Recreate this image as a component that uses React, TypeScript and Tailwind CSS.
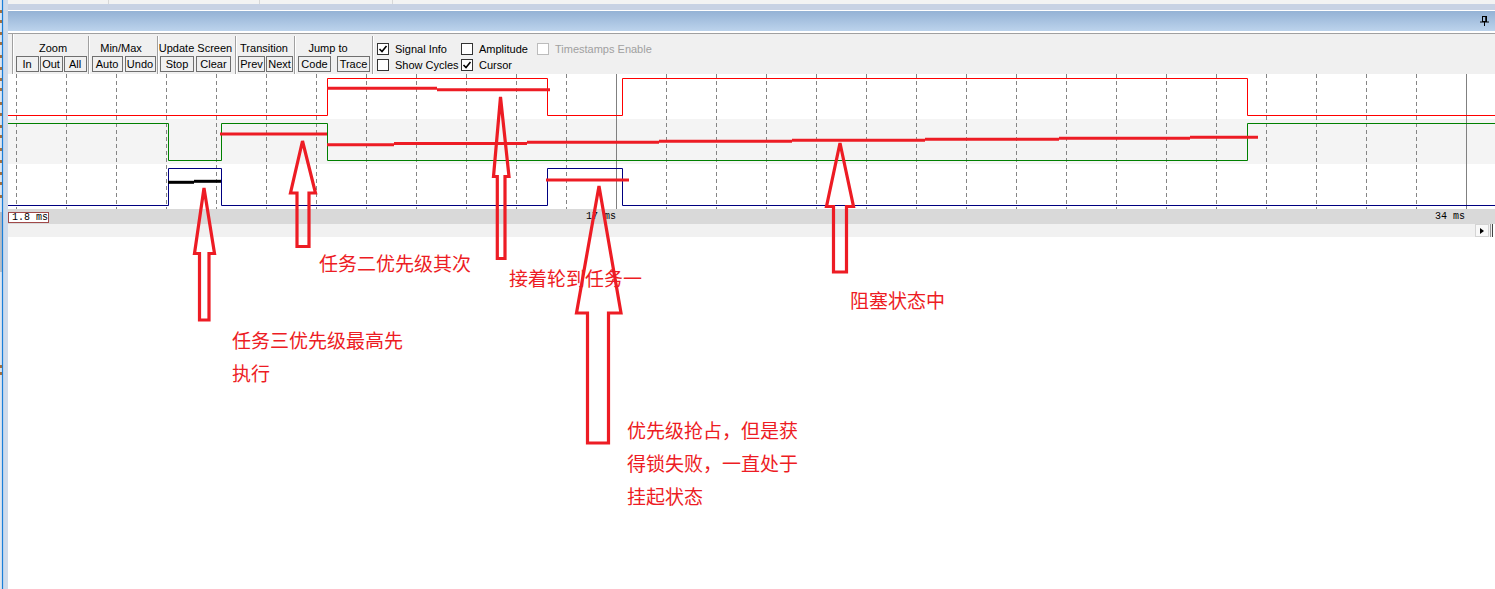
import React from 'react'

const RED = '#ed1c24'

const GRID_X = Array.from({ length: 30 }, (_, i) => 16.5 + i * 50)
const CURSOR_X = [616.5, 1466.5]

const SIG_RED = '8,115.5 327.5,115.5 327.5,78.5 547.5,78.5 547.5,115.5 622.5,115.5 622.5,78.5 1247.5,78.5 1247.5,115.5 1495,115.5'
const SIG_GREEN = '8,123.5 168.5,123.5 168.5,160.5 221.5,160.5 221.5,123.5 327.5,123.5 327.5,160.5 1247.5,160.5 1247.5,123.5 1495,123.5'
const SIG_NAVY = '8,205.5 168.5,205.5 168.5,168.5 221.5,168.5 221.5,205.5 547.5,205.5 547.5,168.5 622.5,168.5 622.5,205.5 1495,205.5'

// hand drawn marks on top of the trace
const MARKS = [
  { x1: 327, x2: 437, y: 88.3, c: RED },
  { x1: 437, x2: 550, y: 89.7, c: RED },
  { x1: 220, x2: 327, y: 134, c: RED },
  { x1: 327, x2: 394, y: 144.7, c: RED },
  { x1: 394, x2: 527, y: 143.5, c: RED },
  { x1: 527, x2: 659, y: 142.3, c: RED },
  { x1: 659, x2: 792, y: 141.3, c: RED },
  { x1: 792, x2: 925, y: 140.3, c: RED },
  { x1: 925, x2: 1059, y: 139.3, c: RED },
  { x1: 1059, x2: 1190, y: 138.3, c: RED },
  { x1: 1190, x2: 1258, y: 137.3, c: RED },
  { x1: 546, x2: 629, y: 180, c: RED },
  { x1: 168, x2: 194, y: 182.3, c: '#000' },
  { x1: 194, x2: 221, y: 181.3, c: '#000' },
]

const ARROWS = [
  { tx: 204, ty: 188, base: 253.5, hl: 194.5, hr: 214.5, sl: 199.5, sr: 209, bottom: 320 },
  { tx: 302.5, ty: 141, base: 193, hl: 290.5, hr: 315.5, sl: 297, sr: 309, bottom: 246.5 },
  { tx: 500.5, ty: 97, base: 176.5, hl: 493.5, hr: 509, sl: 497.3, sr: 505, bottom: 258.5 },
  { tx: 599, ty: 186, base: 313, hl: 576.5, hr: 621, sl: 587.5, sr: 608.5, bottom: 443 },
  { tx: 840, ty: 143, base: 206.5, hl: 826.5, hr: 853.5, sl: 833.5, sr: 846.5, bottom: 272 },
]

const arrowPoints = (a: (typeof ARROWS)[number]) =>
  `${a.tx},${a.ty} ${a.hr},${a.base} ${a.sr},${a.base} ${a.sr},${a.bottom} ${a.sl},${a.bottom} ${a.sl},${a.base} ${a.hl},${a.base}`

const NOTES = [
  { left: 'left-[232px] top-[323px]', lines: ['任务三优先级最高先', '执行'] },
  { left: 'left-[319px] top-[246px]', lines: ['任务二优先级其次'] },
  { left: 'left-[509px] top-[261px]', lines: ['接着轮到任务一'] },
  { left: 'left-[627px] top-[413px]', lines: ['优先级抢占，但是获', '得锁失败，一直处于', '挂起状态'] },
  { left: 'left-[850px] top-[283px]', lines: ['阻塞状态中'] },
]

function Sep({ full }: { full?: boolean }) {
  return (
    <div className={`w-[2px] flex ${full ? '' : 'mt-[2px]'}`}>
      <div className="w-px bg-[#a0a0a0]" />
      <div className="w-px bg-white" />
    </div>
  )
}

function Btn({ label, w }: { label: string; w: string }) {
  return (
    <div className={`${w} h-[16px] border border-[#6f6f6f] bg-[#f0f0f0] flex items-center justify-center text-[11px] leading-none text-black`}>
      {label}
    </div>
  )
}

function Group({ label, className, labelClass, gap, children }: {
  label: string
  className: string
  labelClass?: string
  gap: string
  children: React.ReactNode
}) {
  return (
    <div className={`flex flex-col items-center pt-[7px] ${className}`}>
      <div className={`h-[14px] leading-[15px] text-[11px] text-black whitespace-nowrap ${labelClass ?? ''}`}>{label}</div>
      <div className={`mt-[1px] flex ${gap}`}>{children}</div>
    </div>
  )
}

function Check({ label, checked, disabled }: { label: string; checked?: boolean; disabled?: boolean }) {
  return (
    <div className="flex items-center gap-[6px]">
      <div className={`w-[12px] h-[12px] border bg-white flex items-center justify-center ${disabled ? 'border-[#bcbcbc]' : 'border-[#333333]'}`}>
        {checked && (
          <svg width="10" height="10" viewBox="0 0 10 10">
            <path d="M1.5 5 L4 7.5 L8.5 2" fill="none" stroke="#000" strokeWidth="1.6" />
          </svg>
        )}
      </div>
      <span className={`text-[11px] leading-none whitespace-nowrap ${disabled ? 'text-[#a0a0a0]' : 'text-black'}`}>{label}</span>
    </div>
  )
}

function LeftStrip() {
  const dots = [10, 20, 32, 42, 55, 67, 78, 88, 102, 113, 125, 135, 148, 160, 172, 182, 195, 365, 372]
  return (
    <svg width="8" height="589" className="shrink-0 block">
      <rect x="0" y="0" width="8" height="589" fill="#cfdbeb" />
      <rect x="0" y="0" width="2" height="589" fill="#dfe6f0" />
      {dots.map(y => (
        <rect key={y} x="0" y={y} width="2" height="3" fill="#a8703c" />
      ))}
      <rect x="0" y="212" width="2" height="60" fill="#b9bec6" />
      <line x1="2.5" y1="0" x2="2.5" y2="589" stroke="#1a7fd9" strokeWidth="1.2" />
    </svg>
  )
}

export default function App() {
  return (
    <div className="relative w-[1495px] h-[589px] overflow-hidden bg-white flex font-['Liberation_Sans',Arial,sans-serif]">
      <LeftStrip />

      <div className="flex-1 flex flex-col min-w-0">
        {/* top frame */}
        <div className="h-[4px] bg-[#f3f3f3] flex">
          <div className="w-[100px]" />
          <div className="w-px bg-[#d8d8d8]" />
          <div className="w-[150px]" />
          <div className="w-px bg-[#d8d8d8]" />
          <div className="w-[132px]" />
          <div className="w-px bg-[#d8d8d8]" />
        </div>
        <div className="h-[6px] bg-[#c8d2e4]" />
        <div className="h-[1px] bg-white" />
        <div className="h-[20px] bg-linear-to-b from-[#94b2d5] to-[#bcd3ec] flex items-center justify-end pr-[5px]">
          <svg width="10" height="10" viewBox="0 0 10 10">
            <rect x="2.5" y="0.5" width="4" height="5" fill="none" stroke="#000" />
            <line x1="6" y1="0.5" x2="6" y2="5.5" stroke="#000" strokeWidth="1.5" />
            <line x1="0" y1="6" x2="9" y2="6" stroke="#000" />
            <line x1="4.5" y1="6" x2="4.5" y2="10" stroke="#000" />
          </svg>
        </div>
        <div className="h-[2px] bg-white" />

        {/* toolbar */}
        <div className="h-[41px] border-t border-[#a0a0a0] bg-[#f0f0f0] flex">
          <div className="w-[4px]" />
          <Sep full />
          <Group label="Zoom" className="w-[74px]" labelClass="ml-[4px]" gap="gap-[1px]">
            <Btn label="In" w="w-[23px]" />
            <Btn label="Out" w="w-[23px]" />
            <Btn label="All" w="w-[23px]" />
          </Group>
          <Sep />
          <Group label="Min/Max" className="w-[67px]" labelClass="mr-[5px]" gap="gap-[2px]">
            <Btn label="Auto" w="w-[31px]" />
            <Btn label="Undo" w="w-[31px]" />
          </Group>
          <Sep />
          <Group label="Update Screen" className="w-[76px] pr-[3px]" gap="gap-[2px]">
            <Btn label="Stop" w="w-[34px]" />
            <Btn label="Clear" w="w-[35px]" />
          </Group>
          <Sep />
          <Group label="Transition" className="w-[57px]" labelClass="mr-[3px]" gap="gap-[1px]">
            <Btn label="Prev" w="w-[27px]" />
            <Btn label="Next" w="w-[27px]" />
          </Group>
          <Sep />
          <Group label="Jump to" className="w-[76px]" labelClass="mr-[12px]" gap="gap-[6px]">
            <Btn label="Code" w="w-[33px]" />
            <Btn label="Trace" w="w-[33px]" />
          </Group>
          <Sep />
          <div className="ml-[3px] pt-[7px] grid grid-cols-[84px_76px_auto] grid-rows-[16px_16px] items-center">
            <Check label="Signal Info" checked />
            <Check label="Amplitude" />
            <Check label="Timestamps Enable" disabled />
            <Check label="Show Cycles" />
            <Check label="Cursor" checked />
          </div>
        </div>

        {/* logic analyzer trace */}
        <svg width="1487" height="135" viewBox="8 74 1487 135" className="block shrink-0">
          <rect x="8" y="74" width="1487" height="45" fill="#ffffff" />
          <rect x="8" y="119" width="1487" height="45" fill="#f4f4f4" />
          <rect x="8" y="164" width="1487" height="45" fill="#ffffff" />
          {GRID_X.map(x =>
            CURSOR_X.includes(x) ? (
              <line key={x} x1={x} y1="74" x2={x} y2="209" stroke="#808080" strokeWidth="1" />
            ) : (
              <line key={x} x1={x} y1="74" x2={x} y2="209" stroke="#858585" strokeWidth="1" strokeDasharray="4 3" />
            )
          )}
          <polyline points={SIG_RED} fill="none" stroke="#ff0000" strokeWidth="1" />
          <polyline points={SIG_GREEN} fill="none" stroke="#008000" strokeWidth="1" />
          <polyline points={SIG_NAVY} fill="none" stroke="#000080" strokeWidth="1" />
        </svg>

        {/* time axis */}
        <div className="h-[15px] bg-[#d9d9d9] relative font-['Liberation_Mono',monospace] text-[10px] text-black">
          <div className="absolute left-0 top-[3px] w-[41px] h-[11px] border border-[#a04848] bg-white flex items-center pl-[3px] leading-none">1.8 ms</div>
          <div className="absolute left-[578px] top-0 h-full flex items-center leading-none">17 ms</div>
          <div className="absolute left-[1427px] top-0 h-full flex items-center leading-none">34 ms</div>
        </div>

        {/* scroll strip */}
        <div className="h-[13px] bg-[#f1f1f1] flex justify-end">
          <div className="w-[14px] h-full bg-[#f8f8f8] border border-[#d4d4d4] flex items-center justify-center">
            <svg width="4" height="6" viewBox="0 0 4 6">
              <path d="M0 0 L4 3 L0 6 Z" fill="#000" />
            </svg>
          </div>
          <div className="w-[1px] bg-[#9a9a9a] ml-[1px]" />
          <div className="w-[1px] bg-[#444444] ml-[1px]" />
          <div className="w-[2px] bg-white" />
        </div>

        <div className="flex-1 bg-white" />
      </div>

      {/* annotations drawn over the screenshot */}
      <svg width="1495" height="589" className="absolute left-0 top-0 pointer-events-none">
        {MARKS.map((m, i) => (
          <line key={i} x1={m.x1} y1={m.y} x2={m.x2} y2={m.y} stroke={m.c} strokeWidth="3" />
        ))}
        {ARROWS.map((a, i) => (
          <polygon key={i} points={arrowPoints(a)} fill="none" stroke={RED} strokeWidth="3.2" strokeLinejoin="miter" />
        ))}
      </svg>

      {NOTES.map(n => (
        <div
          key={n.lines[0]}
          className={`absolute ${n.left} text-[19px] leading-[33px] text-[#ed1c24] whitespace-nowrap font-['Noto_Sans_CJK_SC','Noto_Sans',sans-serif]`}
        >
          {n.lines.map(l => (
            <div key={l}>{l}</div>
          ))}
        </div>
      ))}
    </div>
  )
}
